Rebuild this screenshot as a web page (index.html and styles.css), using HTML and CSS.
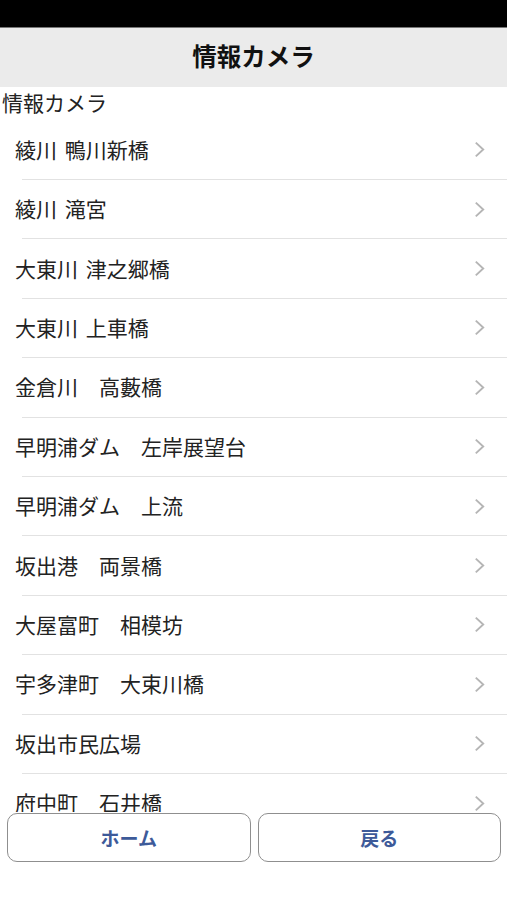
FILE: index.html
```html
<!DOCTYPE html>
<html lang="ja">
<head>
<meta charset="utf-8">
<link rel="stylesheet" href="styles.css">
</head>
<body>
<div class="status"></div>
<header class="bar"><h1 class="title">情報カメラ</h1></header>
<div class="label">情報カメラ</div>
<ul class="list">
<li class="row"><span class="txt">綾川 鴨川新橋</span><svg class="chev" viewBox="0 0 10 16"><path d="M1.5 1.5 L8.5 8 L1.5 14.5"/></svg></li>
<li class="row"><span class="txt">綾川 滝宮</span><svg class="chev" viewBox="0 0 10 16"><path d="M1.5 1.5 L8.5 8 L1.5 14.5"/></svg></li>
<li class="row"><span class="txt">大東川 津之郷橋</span><svg class="chev" viewBox="0 0 10 16"><path d="M1.5 1.5 L8.5 8 L1.5 14.5"/></svg></li>
<li class="row"><span class="txt">大東川 上車橋</span><svg class="chev" viewBox="0 0 10 16"><path d="M1.5 1.5 L8.5 8 L1.5 14.5"/></svg></li>
<li class="row"><span class="txt">金倉川　高藪橋</span><svg class="chev" viewBox="0 0 10 16"><path d="M1.5 1.5 L8.5 8 L1.5 14.5"/></svg></li>
<li class="row"><span class="txt">早明浦ダム　左岸展望台</span><svg class="chev" viewBox="0 0 10 16"><path d="M1.5 1.5 L8.5 8 L1.5 14.5"/></svg></li>
<li class="row"><span class="txt">早明浦ダム　上流</span><svg class="chev" viewBox="0 0 10 16"><path d="M1.5 1.5 L8.5 8 L1.5 14.5"/></svg></li>
<li class="row"><span class="txt">坂出港　両景橋</span><svg class="chev" viewBox="0 0 10 16"><path d="M1.5 1.5 L8.5 8 L1.5 14.5"/></svg></li>
<li class="row"><span class="txt">大屋富町　相模坊</span><svg class="chev" viewBox="0 0 10 16"><path d="M1.5 1.5 L8.5 8 L1.5 14.5"/></svg></li>
<li class="row"><span class="txt">宇多津町　大束川橋</span><svg class="chev" viewBox="0 0 10 16"><path d="M1.5 1.5 L8.5 8 L1.5 14.5"/></svg></li>
<li class="row"><span class="txt">坂出市民広場</span><svg class="chev" viewBox="0 0 10 16"><path d="M1.5 1.5 L8.5 8 L1.5 14.5"/></svg></li>
<li class="row"><span class="txt">府中町　石井橋</span><svg class="chev" viewBox="0 0 10 16"><path d="M1.5 1.5 L8.5 8 L1.5 14.5"/></svg></li>
</ul>
<footer class="foot">
<button class="btn">ホーム</button>
<button class="btn">戻る</button>
</footer>
</body>
</html>
```
FILE: styles.css
```css
html, body {
  margin: 0;
  padding: 0;
  background: #fff;
  font-family: "Noto Sans CJK JP", "Noto Sans", sans-serif;
  color: #222;
  overflow: hidden;
  height: 900px;
}
.status {
  height: 27px;
  background: #000;
  border-bottom: 1px solid #777;
}
.bar {
  height: 59px;
  background: #ebebeb;
  display: flex;
  align-items: center;
  justify-content: center;
}
.title {
  margin: 0;
  font-size: 24.5px;
  font-weight: bold;
  color: #111;
  line-height: 1;
  padding-bottom: 2px;
}
.label {
  height: 33.6px;
  font-size: 21px;
  line-height: 1;
  padding-left: 2px;
  padding-top: 5px;
  box-sizing: border-box;
  color: #222;
}
.list {
  list-style: none;
  margin: 0;
  padding: 0 0 0 22px;
}
.row {
  height: 58.4px;
  border-bottom: 1px solid #e2e2e2;
  display: flex;
  align-items: center;
  justify-content: space-between;
  padding-right: 22px;
}
.txt {
  font-size: 21px;
  line-height: 1;
  margin-left: -7px;
  word-spacing: 3px;
  padding-bottom: 1px;
}
.chev {
  width: 11px;
  height: 17px;
  fill: none;
  stroke: #b5b5b5;
  stroke-width: 1.8;
}
.foot {
  position: fixed;
  left: 0;
  right: 0;
  bottom: 0;
  height: 88px;
  background: #fff;
  display: flex;
  gap: 7px;
  padding: 1px 6px 0 7px;
  box-sizing: border-box;
  align-items: flex-start;
}
.btn {
  flex: 1;
  height: 49px;
  border: 1.5px solid #8f8f8f;
  border-radius: 10px;
  background: #fff;
  font-family: "Noto Sans CJK JP", sans-serif;
  font-size: 19px;
  font-weight: bold;
  color: #3d5a99;
  padding: 0;
}
```
